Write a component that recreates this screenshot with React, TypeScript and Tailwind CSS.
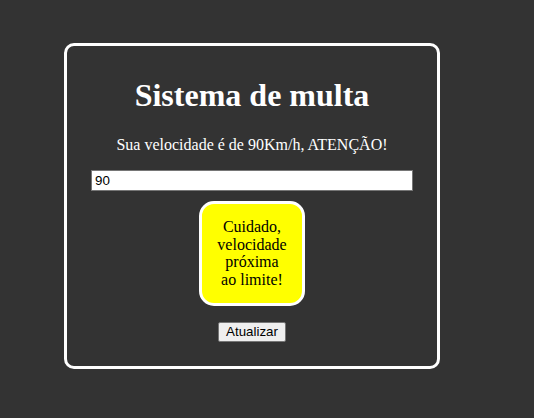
import { useState } from "react";

const App = () => {
  const [velocidade, setVelocidade] = useState("90");

  return (
    <div className="min-h-[418px] w-full bg-[#333333] pt-[43px] font-['Liberation_Serif',serif]">
      <div className="ml-[64px] flex w-[376px] flex-col items-center rounded-[10px] border-[3px] border-white pt-[31px] pb-[24px]">
        <h1 className="h-[37px] text-[32px] font-bold leading-[37px] text-white">Sistema de multa</h1>
        <p className="mt-[21.5px] text-[16px] leading-[18px] text-white">
          Sua velocidade é de {velocidade}Km/h, ATENÇÃO!
        </p>
        <input
          type="text"
          value={velocidade}
          onChange={(e) => setVelocidade(e.target.value)}
          className="mt-[16px] h-[21px] w-[322px] border border-[#767676] bg-white pl-[3px] pr-[2px] font-['Liberation_Sans',sans-serif] text-[13.33px] text-black outline-none"
        />
        <div className="mt-[10px] flex h-[105px] w-[106px] items-center justify-center rounded-[15px] border-[3px] border-white bg-[#ffff00] text-center text-[16px] leading-[17.5px] text-black">
          Cuidado,<br />velocidade<br />próxima<br />ao limite!
        </div>
        <button className="mt-[16px] h-[20px] w-[68px] rounded-[2px] border border-[#767676] bg-[#efefef] font-['Liberation_Sans',sans-serif] text-[13.33px] leading-[18px] text-black">
          Atualizar
        </button>
      </div>
    </div>
  );
};

export default App;
